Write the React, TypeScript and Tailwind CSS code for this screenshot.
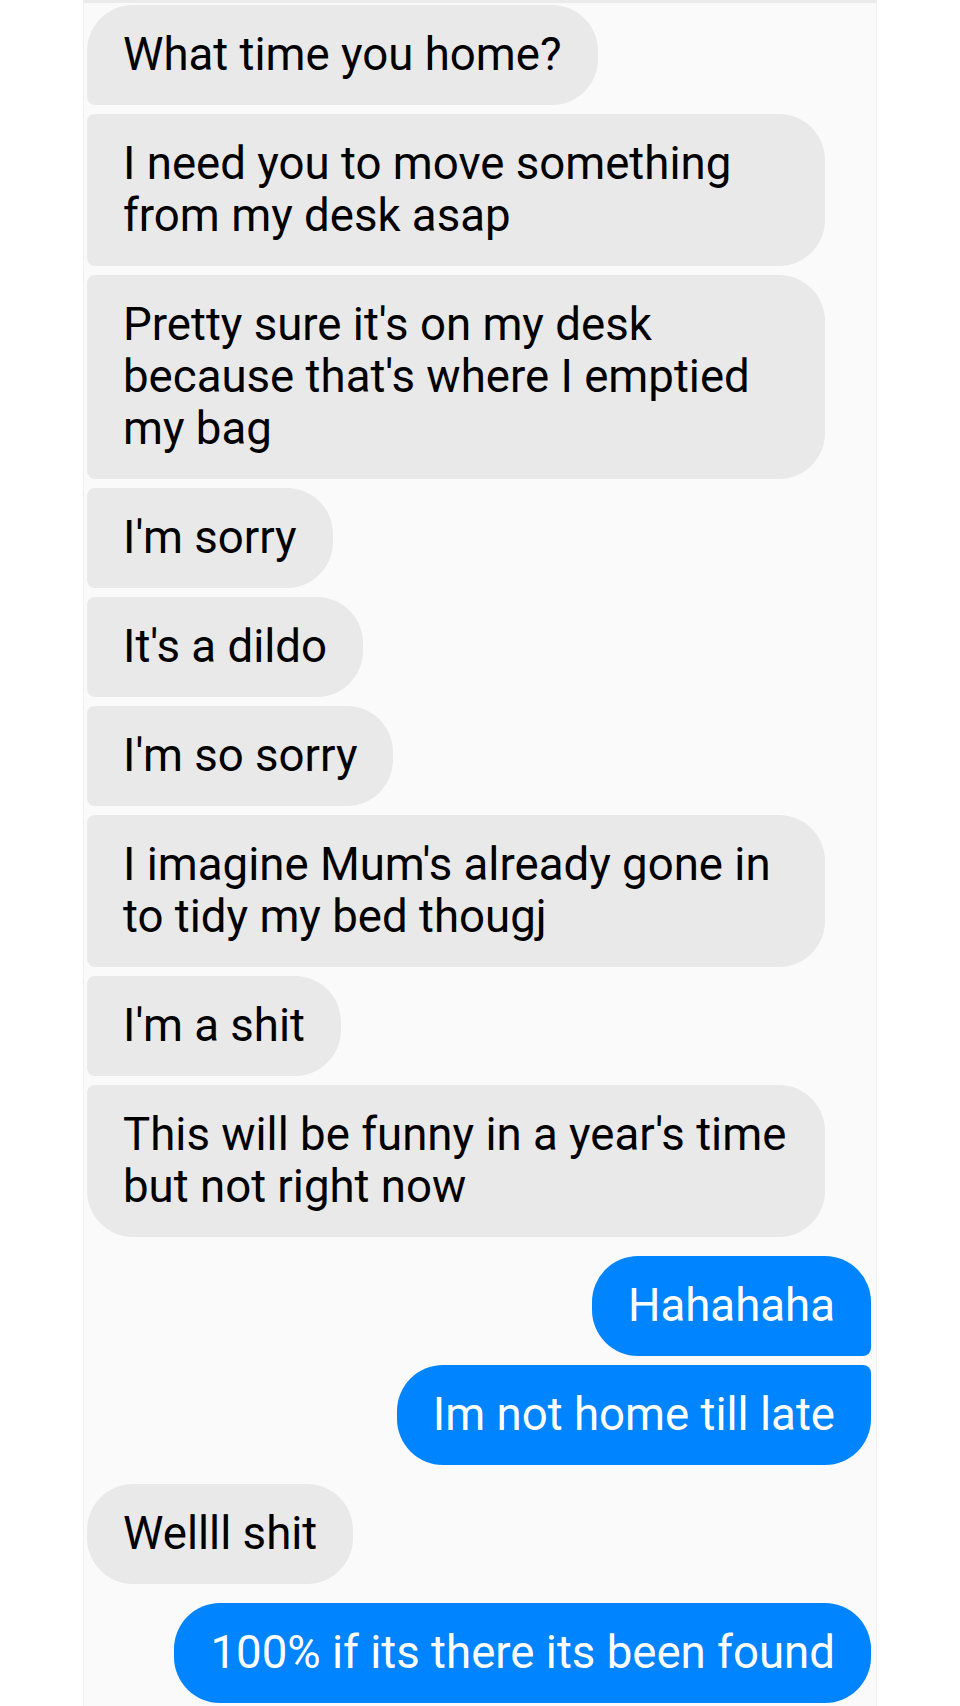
import React from 'react';

type Message = {
  id: number;
  mine: boolean;
  text: string;
};

const messages: Message[] = [
  { id: 1, mine: false, text: 'What time you home?' },
  { id: 2, mine: false, text: 'I need you to move something from my desk asap' },
  { id: 3, mine: false, text: "Pretty sure it's on my desk because that's where I emptied my bag" },
  { id: 4, mine: false, text: "I'm sorry" },
  { id: 5, mine: false, text: "It's a dildo" },
  { id: 6, mine: false, text: "I'm so sorry" },
  { id: 7, mine: false, text: "I imagine Mum's already gone in to tidy my bed thougj" },
  { id: 8, mine: false, text: "I'm a shit" },
  { id: 9, mine: false, text: "This will be funny in a year's time but not right now" },
  { id: 10, mine: true, text: 'Hahahaha' },
  { id: 11, mine: true, text: 'Im not home till late' },
  { id: 12, mine: false, text: 'Wellll shit' },
  { id: 13, mine: true, text: '100% if its there its been found' },
];

const App: React.FC = () => {
  return (
    <div className="min-h-[1706px] bg-white" style={{ fontFamily: 'Roboto, "Noto Sans", sans-serif' }}>
      <div className="mx-auto w-[794px] min-h-[1706px] bg-[#fafafa] border-x border-[#efefef] border-t-[3px] border-t-[#ebebeb] pt-[2px] pl-[3px] pr-[5px] overflow-hidden">
        {messages.map((msg, i) => {
          const prev = messages[i - 1];
          const next = messages[i + 1];
          const joinTop = prev && prev.mine === msg.mine;
          const joinBottom = next && next.mine === msg.mine;
          const spacing = i === 0 ? '' : joinTop ? 'mt-[9px]' : 'mt-[19px]';

          // the side facing the sender gets tight corners inside a group
          let corners = '';
          if (msg.mine) {
            corners = [
              'rounded-l-[46px]',
              joinTop ? 'rounded-tr-[8px]' : 'rounded-tr-[46px]',
              joinBottom ? 'rounded-br-[8px]' : 'rounded-br-[46px]',
            ].join(' ');
          } else {
            corners = [
              'rounded-r-[46px]',
              joinTop ? 'rounded-tl-[8px]' : 'rounded-tl-[46px]',
              joinBottom ? 'rounded-bl-[8px]' : 'rounded-bl-[46px]',
            ].join(' ');
          }

          return (
            <div key={msg.id} className={`flex ${msg.mine ? 'justify-end' : 'justify-start'} ${spacing}`}>
              <div
                className={`max-w-[738px] px-9 py-6 text-[45.6px] leading-[52px] ${corners} ${
                  msg.mine ? 'bg-[#0084ff] text-white' : 'bg-[#e9e9e9] text-black'
                }`}
              >
                {msg.text}
              </div>
            </div>
          );
        })}
      </div>
    </div>
  );
};

export default App;
